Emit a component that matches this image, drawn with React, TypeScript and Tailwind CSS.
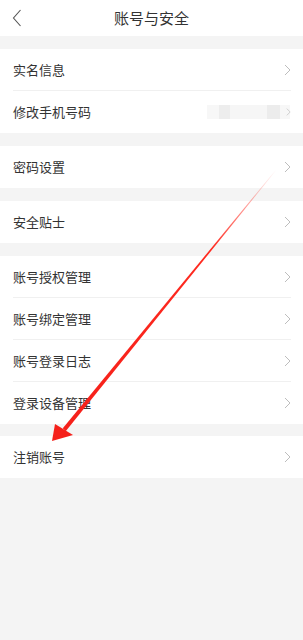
import React from 'react';

const font = { fontFamily: '"Noto Sans CJK SC", "Noto Sans", sans-serif' };

const Chevron = ({ small }: { small?: boolean }) => (
  <svg width={small ? 5 : 7} height={small ? 8 : 12} viewBox="0 0 7 12" className="shrink-0">
    <path d="M1 1 L6 6 L1 11" fill="none" stroke="#bdbdbd" strokeWidth="1" />
  </svg>
);

const Row = ({ label, last, extra }: { label: string; last?: boolean; extra?: React.ReactNode }) => (
  <div className="flex h-[42px] items-center bg-white pl-[13px] pr-[12px]">
    <div className={`flex h-full flex-1 items-center ${last ? '' : 'border-b border-[#f0f0f0]'}`}>
      <span className="flex-1 text-[13px] text-[#333]">{label}</span>
      {extra}
      <Chevron small={!!extra} />
    </div>
  </div>
);

const Blurred = () => (
  <div className="mr-[-4px] flex h-[14px]">
    <div className="w-[12px] bg-[#f7f7f7]" />
    <div className="w-[11px] bg-[#ededed]" />
    <div className="w-[37px] bg-[#f6f6f6]" />
    <div className="w-[13px] bg-[#ececec]" />
    <div className="w-[10px] bg-[#f7f7f7]" />
  </div>
);

export default function App() {
  return (
    <div className="relative min-h-[640px] w-[303px] bg-[#f4f4f4]" style={font}>
      <div className="relative flex h-[36px] items-center justify-center bg-white">
        <svg width="10" height="18" viewBox="0 0 10 18" className="absolute left-[12px] top-[9px]">
          <path d="M8.5 1 L1.5 9 L8.5 17" fill="none" stroke="#555" strokeWidth="1.1" />
        </svg>
        <span className="text-[15px] text-[#333]">账号与安全</span>
      </div>

      <div className="mt-[13px]">
        <Row label="实名信息" />
        <Row label="修改手机号码" last extra={<Blurred />} />
      </div>

      <div className="mt-[13px]">
        <Row label="密码设置" last />
      </div>

      <div className="mt-[13px]">
        <Row label="安全贴士" last />
      </div>

      <div className="mt-[13px]">
        <Row label="账号授权管理" />
        <Row label="账号绑定管理" />
        <Row label="账号登录日志" />
        <Row label="登录设备管理" last />
      </div>

      <div className="mt-[12px]">
        <Row label="注销账号" last />
      </div>

      <svg className="pointer-events-none absolute left-0 top-0" width="303" height="640">
        <defs>
          <linearGradient id="arrowFade" gradientUnits="userSpaceOnUse" x1="276" y1="170" x2="64" y2="430">
            <stop offset="0" stopColor="#ff2a1f" stopOpacity="0" />
            <stop offset="0.3" stopColor="#ff2a1f" stopOpacity="1" />
            <stop offset="1" stopColor="#f5201a" stopOpacity="1" />
          </linearGradient>
        </defs>
        <polygon points="276.2,170.2 275.8,169.8 62.8,428.3 65.7,431.2" fill="url(#arrowFade)" />
        <polygon points="52,441 55,424 73,435" fill="#f5201a" />
      </svg>
    </div>
  );
}
